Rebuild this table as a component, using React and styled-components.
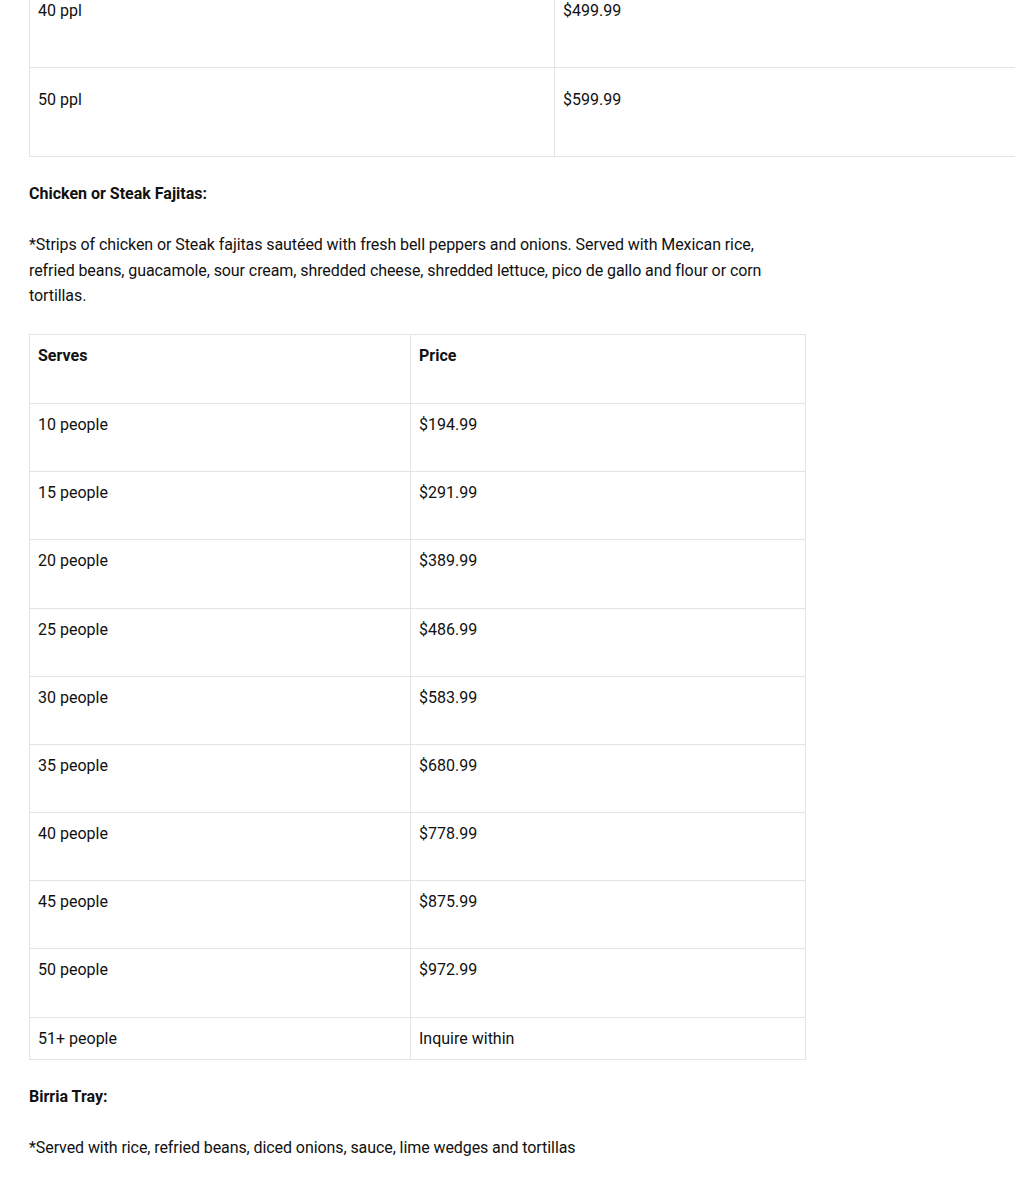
import React from "react";
import styled, { createGlobalStyle } from "styled-components";

const Global = createGlobalStyle`
  html, body { margin: 0; padding: 0; background: #fff; overflow: hidden; }
  body {
    font-family: Roboto, "Liberation Sans", Arial, sans-serif;
    font-size: 16px;
    line-height: 25.6px;
    color: #111;
  }
`;

const Page = styled.main`
  padding: 0 0 0 29px;
  margin-top: -22px;
  width: 777px;
  display: flex;
  flex-direction: column;
`;

const Table = styled.table`
  border-collapse: collapse;
  width: ${(p) => p.$width}px;
  table-layout: fixed;
  flex-shrink: 0;
  margin: 0 0 24px;
`;

const Cell = styled.td`
  border: 1px solid #e4e4e4;
  padding: ${(p) => p.$pad}px 8px;
  vertical-align: top;
  font-weight: ${(p) => (p.$bold ? 700 : 400)};
  white-space: pre-line;
`;

const Heading = styled.p`
  margin: 0 0 25px;
  font-weight: 700;
`;

const Text = styled.p`
  margin: 0 0 25px;
  max-width: 765px;
  letter-spacing: -0.08px;
`;

const bigRows = [
  ["40 ppl", "$499.99"],
  ["50 ppl", "$599.99"],
];

const fajitaRows = [
  ["10 people", "$194.99"],
  ["15 people", "$291.99"],
  ["20 people", "$389.99"],
  ["25 people", "$486.99"],
  ["30 people", "$583.99"],
  ["35 people", "$680.99"],
  ["40 people", "$778.99"],
  ["45 people", "$875.99"],
  ["50 people", "$972.99"],
];

export default function App() {
  return (
    <>
      <Global />
      <Page>
        <Table $width={1050}>
          <colgroup>
            <col style={{ width: 525 }} />
            <col />
          </colgroup>
          <tbody>
            {bigRows.map(([a, b]) => (
              <tr key={a}>
                <Cell $pad={18.5}>{a + "\n\u00a0"}</Cell>
                <Cell $pad={18.5}>{b + "\n\u00a0"}</Cell>
              </tr>
            ))}
          </tbody>
        </Table>

        <Heading>Chicken or Steak Fajitas:</Heading>
        <Text>
          *Strips of chicken or Steak fajitas sautéed with fresh bell peppers and onions. Served with
          Mexican rice, refried beans, guacamole, sour cream, shredded cheese, shredded lettuce, pico
          de gallo and flour or corn tortillas.
        </Text>

        <Table $width={777}>
          <colgroup>
            <col style={{ width: 381 }} />
            <col />
          </colgroup>
          <tbody>
            <tr>
              <Cell $pad={8.5} $bold>{"Serves\n\u00a0"}</Cell>
              <Cell $pad={8.5} $bold>{"Price\n\u00a0"}</Cell>
            </tr>
            {fajitaRows.map(([a, b]) => (
              <tr key={a}>
                <Cell $pad={8}>{a + "\n\u00a0"}</Cell>
                <Cell $pad={8}>{b + "\n\u00a0"}</Cell>
              </tr>
            ))}
            <tr>
              <Cell $pad={8}>51+ people</Cell>
              <Cell $pad={8}>Inquire within</Cell>
            </tr>
          </tbody>
        </Table>

        <Heading>Birria Tray:</Heading>
        <Text>*Served with rice, refried beans, diced onions, sauce, lime wedges and tortillas</Text>
      </Page>
    </>
  );
}
